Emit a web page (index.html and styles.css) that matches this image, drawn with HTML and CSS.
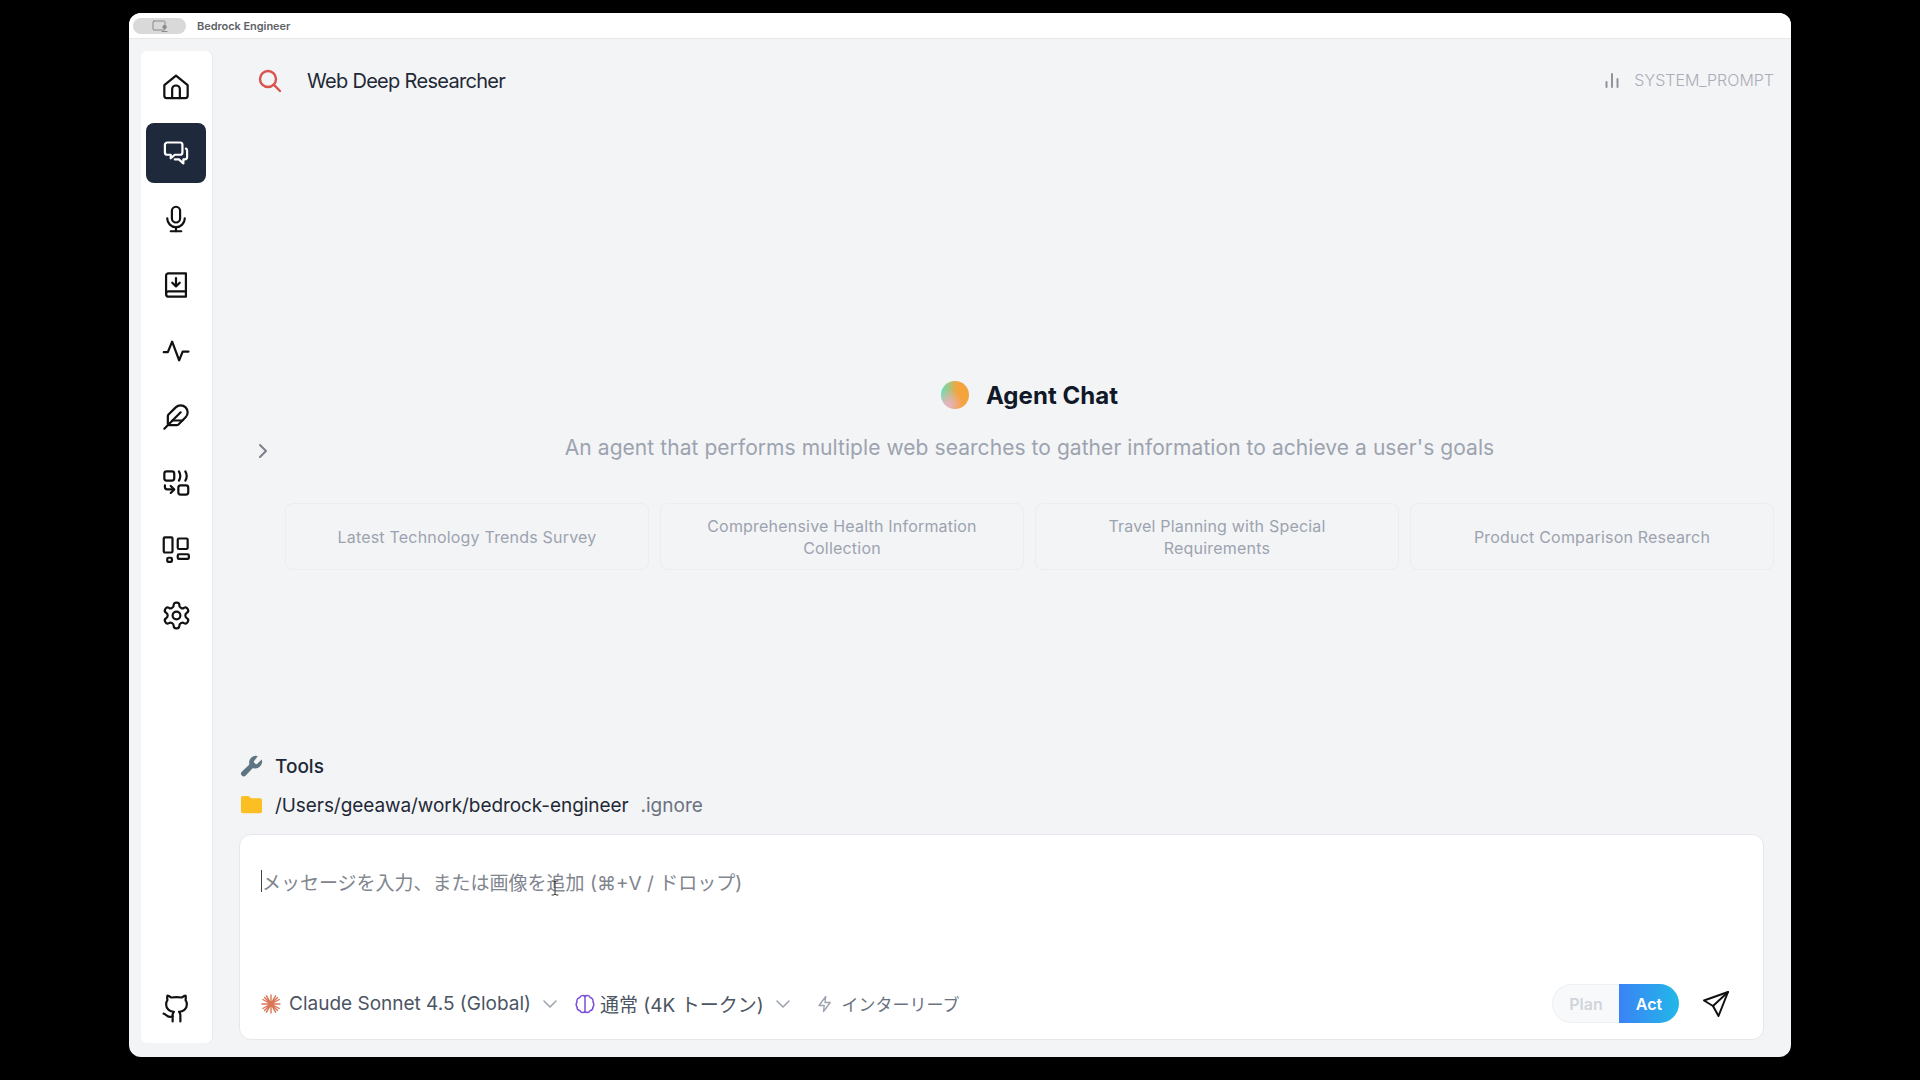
FILE: index.html
```html
<!DOCTYPE html>
<html lang="en">
<head>
  <meta charset="UTF-8">
  <title>Bedrock Engineer</title>
  <link rel="stylesheet" href="styles.css">
</head>
<body>
  <div class="window">
    <div class="titlebar">
      <div class="title-pill">
        <svg class="pill-icon" viewBox="0 0 16 12"><rect x="1" y="1" width="12" height="9" rx="1"/><circle cx="12.5" cy="7" r="1.6" class="solid"/><path d="M10 11.5h5" /></svg>
      </div>
      <span class="title-text">Bedrock Engineer</span>
    </div>

    <div class="app">
      <div class="sidebar">
        <div class="nav-btn">
          <svg viewBox="0 0 24 24"><path d="M2 10.4 12 2.2l10 8.2v9.1a2 2 0 0 1-2 2H4a2 2 0 0 1-2-2z"/><path d="M8.7 21.5V14a3.3 3.3 0 0 1 6.6 0v7.5"/></svg>
        </div>
        <div class="nav-btn active">
          <svg viewBox="0 0 24 24"><path d="M4.5 3h11a2 2 0 0 1 2 2v6.500a2 2 0 0 1-2 2H11L7.500 16.500v-3h-3a2 2 0 0 1-2-2V5a2 2 0 0 1 2-2z"/><path d="M20.500 8.200a2 2 0 0 1 1 1.800v5.500a2 2 0 0 1-2 2h-1.200V21l-3.800-3.500h-3.500"/></svg>
        </div>
        <div class="nav-btn">
          <svg viewBox="0 0 24 24"><rect x="8.500" y="1.500" width="7" height="13.500" rx="3.500"/><path d="M4.500 11.500a7.500 7.500 0 0 0 15 0"/><path d="M12 19v3.500"/><path d="M7.500 22.500h9"/></svg>
        </div>
        <div class="nav-btn">
          <svg viewBox="0 0 24 24"><path d="M20.500 2H5.500a2 2 0 0 0-2 2v16a2.200 2.200 0 0 0 2.200 2h14.800z"/><path d="M3.500 19.500a2 2 0 0 1 2-2h15"/><path d="M12 6v6.500"/><path d="m8.800 10 3.200 3.200 3.200-3.200"/></svg>
        </div>
        <div class="nav-btn">
          <svg viewBox="0 0 24 24"><path d="M1.500 13H5L8.700 4l6 16 3-7.500h5"/></svg>
        </div>
        <div class="nav-btn">
          <svg viewBox="0 0 24 24"><path d="M12.670 19a2 2 0 0 0 1.416-.588l6.154-6.172a6 6 0 0 0-8.490-8.490L5.586 9.914A2 2 0 0 0 5 11.328V18a1 1 0 0 0 1 1z"/><path d="M16 8 2 22"/><path d="M17.500 15H9"/></svg>
        </div>
        <div class="nav-btn">
          <svg viewBox="0 0 24 24"><rect x="2" y="2" width="8.500" height="8" rx="2"/><rect x="14" y="14" width="8.500" height="8" rx="2"/><path d="M14.500 2c1.500 2.500 1.500 5.500 0 8"/><path d="M20 2c1.500 2.500 1.500 5.500 0 8"/><path d="M2.500 14v1.500a2 2 0 0 0 2 2H10"/><path d="m7.500 14.500 3 3-3 3"/></svg>
        </div>
        <div class="nav-btn">
          <svg viewBox="0 0 24 24"><rect x="1.500" y="2" width="7.500" height="13" rx="1"/><rect x="13.500" y="3" width="8.500" height="9" rx="1"/><rect x="4.500" y="19.500" width="4" height="3.500" rx="1"/><rect x="13.500" y="16.500" width="9.500" height="4" rx="1"/></svg>
        </div>
        <div class="nav-btn nav-large">
          <svg viewBox="0 0 24 24"><path d="M12.220 2h-.44a2 2 0 0 0-2 2v.18a2 2 0 0 1-1 1.730l-.43.25a2 2 0 0 1-2 0l-.15-.08a2 2 0 0 0-2.730.73l-.22.38a2 2 0 0 0 .73 2.730l.15.1a2 2 0 0 1 1 1.720v.51a2 2 0 0 1-1 1.740l-.15.09a2 2 0 0 0-.73 2.730l.22.38a2 2 0 0 0 2.730.73l.15-.08a2 2 0 0 1 2 0l.43.25a2 2 0 0 1 1 1.730V20a2 2 0 0 0 2 2h.44a2 2 0 0 0 2-2v-.18a2 2 0 0 1 1-1.730l.43-.25a2 2 0 0 1 2 0l.15.08a2 2 0 0 0 2.730-.73l.22-.39a2 2 0 0 0-.73-2.730l-.15-.08a2 2 0 0 1-1-1.740v-.5a2 2 0 0 1 1-1.740l.15-.09a2 2 0 0 0 .73-2.730l-.22-.38a2 2 0 0 0-2.730-.73l-.15.08a2 2 0 0 1-2 0l-.43-.25a2 2 0 0 1-1-1.730V4a2 2 0 0 0-2-2z"/><circle cx="12" cy="12" r="3"/></svg>
        </div>
        <div class="nav-btn nav-bottom nav-large">
          <svg viewBox="0 0 24 24"><path d="M15 22v-4a4.800 4.800 0 0 0-1-3.500c3 0 6-2 6-5.500.08-1.250-.27-2.480-1-3.500.28-1.150.28-2.350 0-3.500 0 0-1 0-3 1.500-2.640-.5-5.360-.5-8 0C6 2 5 2 5 2c-.3 1.150-.3 2.350 0 3.500A5.403 5.403 0 0 0 4 9c0 3.500 3 5.500 6 5.500-.39.49-.68 1.050-.85 1.650-.17.6-.22 1.230-.15 1.850v4"/><path d="M9 18c-4.510 2-5-2-7-2"/></svg>
        </div>
      </div>

      <div class="content">
        <div class="header">
          <div class="agent-name">
            <svg class="search-icon" viewBox="0 0 24 24"><circle cx="10" cy="10" r="8"/><path d="m22 22-6.300-6.300"/></svg>
            <span>Web Deep Researcher</span>
          </div>
          <div class="system-prompt">
            <svg class="bars-icon" viewBox="0 0 16 16"><path d="M2.500 15v-5"/><path d="M8 15V2"/><path d="M13.500 15V7"/></svg>
            <span>SYSTEM_PROMPT</span>
          </div>
        </div>

        <div class="chat-area">
          <div class="toggle">
            <svg viewBox="0 0 12 16"><path d="m3 2 6 6-6 6"/></svg>
          </div>
          <div class="welcome">
            <div class="welcome-title">
              <div class="logo"></div>
              <h1>Agent Chat</h1>
            </div>
            <p class="welcome-desc">An agent that performs multiple web searches to gather information to achieve a user's goals</p>
            <div class="examples">
              <div class="example">Latest Technology Trends Survey</div>
              <div class="example">Comprehensive Health Information Collection</div>
              <div class="example">Travel Planning with Special Requirements</div>
              <div class="example">Product Comparison Research</div>
            </div>
          </div>
        </div>

        <div class="footer">
          <div class="info-row">
            <svg class="wrench" viewBox="0 0 24 24"><path d="M14.700 6.300a1 1 0 0 0 0 1.400l1.600 1.600a1 1 0 0 0 1.400 0l5-4.500a7 7 0 0 1-9.200 8.700l-7.600 7.900a2.800 2.800 0 0 1-4-4l7.900-7.600A7 7 0 0 1 18.500 1.200z"/></svg>
            <span class="tools-label">Tools</span>
          </div>
          <div class="info-row">
            <svg class="folder" viewBox="0 0 24 24"><path d="M1 5a2 2 0 0 1 2-2h6l2.500 2.500H21a2 2 0 0 1 2 2V19a2 2 0 0 1-2 2H3a2 2 0 0 1-2-2z"/></svg>
            <span class="path-label">/Users/geeawa/work/bedrock-engineer</span>
            <span class="ignore">.ignore</span>
          </div>

          <div class="input-box">
            <div class="input-text"><span class="caret"></span>メッセージを入力、または画像を追加 (⌘+V / ドロップ)</div>
            <svg class="ibeam" viewBox="0 0 8 16"><path d="M1 1h2l1 1 1-1h2M4 2v12M1 15h2l1-1 1 1h2"/></svg>

            <div class="input-bar">
              <div class="select">
                <svg class="star" viewBox="0 0 20 20"><path d="M10 1v18M1 10h18M3.600 3.600l12.800 12.800M16.400 3.600 3.600 16.400M5.500 1.800l9 16.400M14.500 1.800l-9 16.400M1.800 5.500l16.400 9M18.200 5.500l-16.400 9"/></svg>
                <span>Claude Sonnet 4.5 (Global)</span>
                <svg class="chev" viewBox="0 0 14 8"><path d="m1 1 6 6 6-6"/></svg>
              </div>
              <div class="select thinking">
                <svg class="brain" viewBox="0 0 20 20"><path d="M10 1.500v17"/><path d="M10 2.500C8 .8 5.500 1.500 4.800 3.500 2.800 4 1.500 6 2 8c-1 1.500-1 3.500 0 5 0 2 1.500 3.500 3 3.800.8 2 3.500 2.400 5 .7 1.500 1.700 4.200 1.300 5-.7 1.500-.3 3-1.800 3-3.800 1-1.500 1-3.500 0-5 .5-2-.8-4-2.800-4.500C14.500 1.500 12 .8 10 2.500z"/></svg>
                <span>通常 (4K トークン)</span>
                <svg class="chev" viewBox="0 0 14 8"><path d="m1 1 6 6 6-6"/></svg>
              </div>
              <div class="interleave">
                <svg class="bolt" viewBox="0 0 24 24"><path d="M13 2 4 14h7l-1 8 9-12h-7z"/></svg>
                <span>インターリーブ</span>
              </div>
              <div class="mode-toggle">
                <div class="mode plan">Plan</div>
                <div class="mode act">Act</div>
              </div>
              <svg class="send" viewBox="0 0 26 26"><path d="M25 1 1 9.500 10 15l5.500 10z"/><path d="M25 1 10 15"/></svg>
            </div>
          </div>
        </div>
      </div>
    </div>
  </div>
</body>
</html>
```

FILE: styles.css
```css
* {
  box-sizing: border-box;
}

body {
  margin: 0;
  padding: 13px 129px 23px;
  background: #000;
  font-family: Inter, "Noto Sans CJK JP", sans-serif;
}

svg {
  fill: none;
  stroke-linecap: round;
  stroke-linejoin: round;
  flex-shrink: 0;
}

.window {
  height: 1044px;
  width: 1662px;
  background: #f3f4f6;
  border-radius: 12px;
  overflow: hidden;
  display: flex;
  flex-direction: column;
}

.titlebar {
  height: 26px;
  background: #fff;
  border-bottom: 1px solid #e5e7eb;
  display: flex;
  align-items: center;
  padding-left: 4px;
}

.title-pill {
  width: 53px;
  height: 16px;
  background: #d9d9d9;
  border-radius: 8px;
  display: flex;
  align-items: center;
  justify-content: center;
}

.pill-icon {
  width: 16px;
  height: 12px;
  stroke: #8a8a8a;
  stroke-width: 1;
}

.pill-icon .solid {
  fill: #8a8a8a;
}

.title-text {
  margin-left: 11px;
  font-size: 11px;
  font-weight: 600;
  letter-spacing: -0.05px;
  color: #5f6368;
}

.app {
  flex: 1;
  display: flex;
  min-height: 0;
}

/* sidebar */
.sidebar {
  width: 71px;
  margin: 12px 0 14px 12px;
  padding: 6px 6px 5px 5px;
  background: #fff;
  border-radius: 6px;
  display: flex;
  flex-direction: column;
  gap: 6px;
  box-shadow: 1px 0 0 #e8e9ec;
}

.nav-btn {
  width: 60px;
  height: 60px;
  border-radius: 8px;
  display: flex;
  align-items: center;
  justify-content: center;
}

.nav-btn svg {
  width: 28px;
  height: 28px;
  stroke: #111;
  stroke-width: 1.900;
}

.nav-large svg {
  width: 31px;
  height: 31px;
  stroke-width: 1.700;
}

.nav-btn.active {
  background: #1e293b;
}

.nav-btn.active svg {
  stroke: #fff;
}

.nav-bottom {
  margin-top: auto;
}

/* main column */
.content {
  flex: 1;
  min-width: 0;
  display: flex;
  flex-direction: column;
  padding: 0 17px 17px 27px;
}

.header {
  height: 83px;
  flex-shrink: 0;
  padding-left: 19px;
  display: flex;
  align-items: center;
  justify-content: space-between;
}

.agent-name {
  display: flex;
  align-items: center;
  gap: 25px;
  font-size: 20px;
  letter-spacing: -0.7px;
  color: #1f2937;
}

.search-icon {
  width: 24px;
  height: 24px;
  stroke: #d9534f;
  stroke-width: 2.400;
}

.system-prompt {
  display: flex;
  align-items: center;
  gap: 14px;
  padding-bottom: 2px;
  font-size: 16px;
  font-weight: 300;
  color: #a9adb5;
}

.bars-icon {
  width: 16px;
  height: 18px;
  stroke: #8f949c;
  stroke-width: 2;
}

.chat-area {
  flex: 1;
  display: flex;
  padding-top: 258px;
}

.toggle {
  width: 46px;
  padding: 63px 0 0 18px;
  flex-shrink: 0;
}

.toggle svg {
  display: block;
  width: 12px;
  height: 16px;
  stroke: #7b8088;
  stroke-width: 2;
}

.welcome {
  flex: 1;
  min-width: 0;
  display: flex;
  flex-direction: column;
  align-items: center;
}

.welcome-title {
  display: flex;
  align-items: center;
  gap: 17px;
  height: 30px;
}

.logo {
  width: 28px;
  height: 28px;
  border-radius: 50%;
  background:
    radial-gradient(circle at 25% 85%, #eeb0c0 0, rgba(238, 176, 192, 0) 50%),
    linear-gradient(90deg, #67e0b3 5%, #f5a33c 58%);
}

.welcome-title h1 {
  margin: 0;
  font-size: 24px;
  font-weight: 700;
  letter-spacing: 0.05px;
  color: #111827;
}

.welcome-desc {
  margin: 24px 0 0;
  font-size: 21px;
  line-height: 28px;
  letter-spacing: 0.06px;
  color: #9ca3af;
}

.examples {
  width: 100%;
  margin-top: 41px;
  display: grid;
  grid-template-columns: repeat(4, 1fr);
  gap: 11px;
}

.example {
  height: 67px;
  padding: 0 24px;
  border: 1px solid #ebedf0;
  border-radius: 8px;
  display: flex;
  align-items: center;
  justify-content: center;
  text-align: center;
  font-size: 16px;
  line-height: 22px;
  letter-spacing: 0.2px;
  color: #9ca3af;
}

/* bottom section */
.footer {
  padding-right: 10px;
  flex-shrink: 0;
}

.info-row {
  height: 28px;
  margin-bottom: 11px;
  display: flex;
  align-items: center;
  font-size: 19px;
}

.wrench {
  width: 23px;
  height: 23px;
  fill: #5f7483;
  margin: 0 12px 0 1px;
}

.folder {
  width: 23px;
  height: 23px;
  fill: #fbbf24;
  margin: -2px 12px 0 1px;
}

.tools-label {
  font-weight: 500;
  color: #1f2937;
}

.path-label {
  letter-spacing: -0.07px;
  color: #1f2937;
}

.ignore {
  margin-left: 12px;
  color: #6b7280;
}

.input-box {
  position: relative;
  height: 206px;
  margin-top: 15px;
  padding: 32px 21px 16px;
  background: #fff;
  border: 1px solid #e5e7eb;
  border-radius: 12px;
  display: flex;
  flex-direction: column;
  justify-content: space-between;
}

.input-text {
  display: flex;
  align-items: center;
  height: 28px;
  font-size: 19px;
  color: #80858e;
}

.caret {
  width: 1px;
  height: 22px;
  background: #444;
}

.ibeam {
  position: absolute;
  left: 311px;
  top: 45px;
  width: 8px;
  height: 16px;
  stroke: #333;
  stroke-width: 1;
}

.input-bar {
  display: flex;
  align-items: center;
}

.select {
  display: flex;
  align-items: center;
  font-size: 19px;
  color: #4b5563;
}

.star {
  width: 20px;
  height: 20px;
  stroke: #d97757;
  stroke-width: 1.400;
  margin-right: 8px;
}

.chev {
  width: 14px;
  height: 8px;
  margin-left: 12px;
  stroke: #9ca3af;
  stroke-width: 1.500;
}

.thinking {
  margin-left: 18px;
}

.brain {
  width: 20px;
  height: 20px;
  stroke: #7c4dd6;
  stroke-width: 1.500;
  margin-right: 5px;
}

.interleave {
  margin-left: 26px;
  display: flex;
  align-items: center;
  gap: 8px;
  font-size: 17px;
  color: #6b7280;
}

.bolt {
  width: 18px;
  height: 18px;
  stroke: #9ca3af;
  stroke-width: 1.800;
}

.mode-toggle {
  margin-left: auto;
  display: flex;
  height: 39px;
  font-size: 16px;
  font-weight: 600;
}

.mode {
  display: flex;
  align-items: center;
  justify-content: center;
}

.plan {
  width: 67px;
  background: #f8f9fb;
  border: 1px solid #eef0f3;
  border-right: 0;
  border-radius: 20px 0 0 20px;
  color: #d1d5db;
}

.act {
  width: 60px;
  background: linear-gradient(90deg, #3b82f6, #22b8e8);
  border-radius: 0 20px 20px 0;
  color: #fff;
}

.send {
  width: 26px;
  height: 26px;
  margin: 0 13px 0 24px;
  stroke: #111;
  stroke-width: 2;
}
```
